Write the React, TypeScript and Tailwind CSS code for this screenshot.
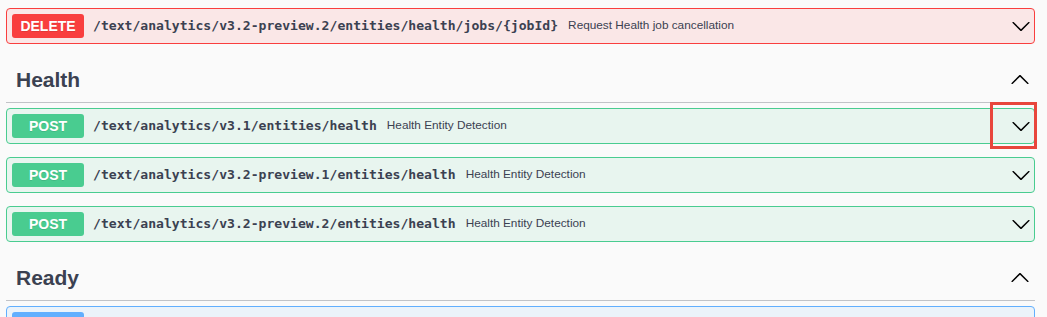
import React from "react";

const ink = "text-[#3b4151]";

function Chevron({ up = false }: { up?: boolean }) {
  return (
    <svg
      viewBox="0 0 20 20"
      className={`size-5 shrink-0 fill-black ${up ? "rotate-180" : ""}`}
      aria-hidden
    >
      <path d="M17.418 6.109c.272-.268.709-.268.979 0s.271.701 0 .969l-7.908 7.83c-.27.268-.707.268-.979 0l-7.908-7.83c-.27-.268-.27-.701 0-.969.271-.268.709-.268.979 0L10 13.25l7.418-7.141z" />
    </svg>
  );
}

type Method = "delete" | "post" | "get";

const styles: Record<Method, { row: string; badge: string; label: string }> = {
  delete: { row: "border-[#f93e3e] bg-[#fae7e7]", badge: "bg-[#f93e3e]", label: "DELETE" },
  post: { row: "border-[#49cc90] bg-[#e8f5ef]", badge: "bg-[#49cc90]", label: "POST" },
  get: { row: "border-[#61affe] bg-[#ebf3fa]", badge: "bg-[#61affe]", label: "" },
};

function Operation({ method, path, summary }: { method: Method; path: string; summary: string }) {
  const s = styles[method];
  return (
    <div className={`flex h-9 items-center rounded-[4px] border pl-[5px] pr-[3px] ${s.row}`}>
      <span
        className={`flex h-6 w-[72px] shrink-0 items-center justify-center rounded-[3px] text-[14px] font-bold text-white [text-shadow:0_1px_0_rgba(0,0,0,0.1)] ${s.badge}`}
      >
        {s.label}
      </span>
      <span className={`ml-[9px] font-['DejaVu_Sans_Mono',monospace] text-[13.1px] font-bold ${ink}`}>{path}</span>
      <span className={`ml-[10px] flex-1 text-[11.8px] ${ink}`}>{summary}</span>
      <Chevron />
    </div>
  );
}

function Tag({ name }: { name: string }) {
  return (
    <div className="mt-[13px] mb-[5px] flex h-[46px] items-center border-b border-[#c1c3c7] pl-[10px] pr-[5px]">
      <h3 className={`flex-1 text-[21px] font-bold ${ink}`}>{name}</h3>
      <Chevron up />
    </div>
  );
}

export default function App() {
  return (
    <div className="relative h-[317px] w-[1047px] overflow-hidden bg-[#fafafa] font-['Liberation_Sans',Arial,sans-serif]">
      <div className="ml-[6px] w-[1029px] pt-2">
        <Operation
          method="delete"
          path="/text/analytics/v3.2-preview.2/entities/health/jobs/{jobId}"
          summary="Request Health job cancellation"
        />
        <Tag name="Health" />
        <div className="flex flex-col gap-[13px]">
          <Operation method="post" path="/text/analytics/v3.1/entities/health" summary="Health Entity Detection" />
          <Operation method="post" path="/text/analytics/v3.2-preview.1/entities/health" summary="Health Entity Detection" />
          <Operation method="post" path="/text/analytics/v3.2-preview.2/entities/health" summary="Health Entity Detection" />
        </div>
        <Tag name="Ready" />
        <Operation method="get" path="" summary="" />
      </div>
      <div className="absolute left-[990px] top-[102px] h-[47px] w-[47px] border-[3px] border-[#e8463c]" />
    </div>
  );
}
